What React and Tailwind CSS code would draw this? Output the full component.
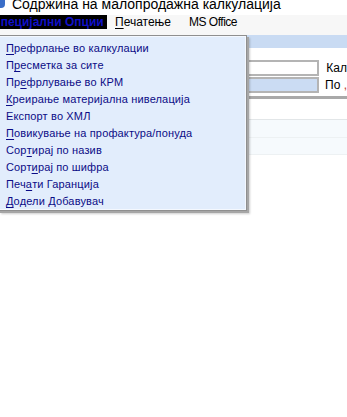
import React from "react";

const items = [
  { pre: "", key: "П", post: "рефрлање во калкулации" },
  { pre: "П", key: "р", post: "есметка за сите" },
  { pre: "Пр", key: "е", post: "фрлување во КРМ" },
  { pre: "", key: "К", post: "реирање материјална нивелација" },
  { pre: "", key: "", post: "Експорт во ХМЛ" },
  { pre: "", key: "П", post: "овикување на профактура/понуда" },
  { pre: "Сор", key: "т", post: "ирај по назив" },
  { pre: "Сорт", key: "и", post: "рај по шифра" },
  { pre: "Печ", key: "а", post: "ти Гаранција" },
  { pre: "", key: "Д", post: "одели Добавувач" },
];

function MenuItem({ item }) {
  return (
    <div className="h-[17px] flex items-center pl-[5px] text-[11px] tracking-[0.15px] text-[#0c0c86] whitespace-nowrap">
      {item.pre}
      {item.key && <span className="underline underline-offset-2">{item.key}</span>}
      {item.post}
    </div>
  );
}

export default function App() {
  return (
    <div className="relative w-[347px] h-[417px] overflow-hidden bg-white font-['Liberation_Sans',Arial,sans-serif]">
      {/* title bar */}
      <div className="h-[15px] flex items-start overflow-hidden">
        <div className="w-[5px] h-[8px] bg-[#3a6ec8] rounded-br-sm" />
        <span className="ml-[7px] mt-[-3px] text-[14px] leading-[15px] text-black whitespace-nowrap">
          Содржина на малопродажна калкулација
        </span>
      </div>

      {/* menu bar */}
      <div className="h-[20px] flex items-start bg-[#f7f7f7] text-[12px]">
        <div className="h-[14px] w-[107px] bg-black overflow-hidden flex items-center">
          <span className="ml-[-8px] font-bold text-[12px] text-[#1010c8] whitespace-nowrap">Специјални Опции</span>
        </div>
        <div className="ml-[8px] h-[14px] flex items-center text-black">
          <span className="underline underline-offset-2">П</span>ечатење
        </div>
        <div className="ml-[18px] h-[14px] flex items-center text-black tracking-[-0.5px]">MS Office</div>
      </div>

      {/* toolbar band */}
      <div className="h-[13px] bg-[#c9dbf3]" />

      {/* form rows */}
      <div className="pt-[12px] flex flex-col gap-[1px]">
        <div className="flex items-center h-[16px]">
          <div className="w-[322px] h-[16px] bg-white border-2 border-[#b4b4b4]" />
          <span className="ml-[7px] text-[12px] text-black whitespace-nowrap">Кал</span>
        </div>
        <div className="flex items-center h-[16px]">
          <div className="w-[322px] h-[16px] bg-[#cbdcf3] border-2 border-[#b4b4b4]" />
          <span className="ml-[6px] text-[12px] text-black whitespace-nowrap">
            По <span className="text-[#c0392b]">,</span>
          </span>
        </div>
      </div>

      {/* grid */}
      <div className="mt-[3px] h-[3px] bg-[#a9a9a9]" />
      <div className="h-[20px] bg-white" />
      <div className="h-[18px] bg-[#f6fafd] border-t border-[#e2e6e8]" />
      <div className="h-[18px] bg-[#f6fafd] border-t border-[#edf1f3] border-b" />

      {/* dropdown menu */}
      <div className="absolute left-[-2px] top-[35px] w-[249px] h-[176px] bg-[#e2edfc] border border-[#8f8f8f] shadow-[2px_2px_0_#a6a6a6,3px_3px_2px_rgba(0,0,0,0.2)]">
        <div className="h-full border border-[#f4f8fe] pt-[3px] pl-[1px]">
          {items.map((item, i) => (
            <MenuItem key={i} item={item} />
          ))}
        </div>
      </div>
    </div>
  );
}
